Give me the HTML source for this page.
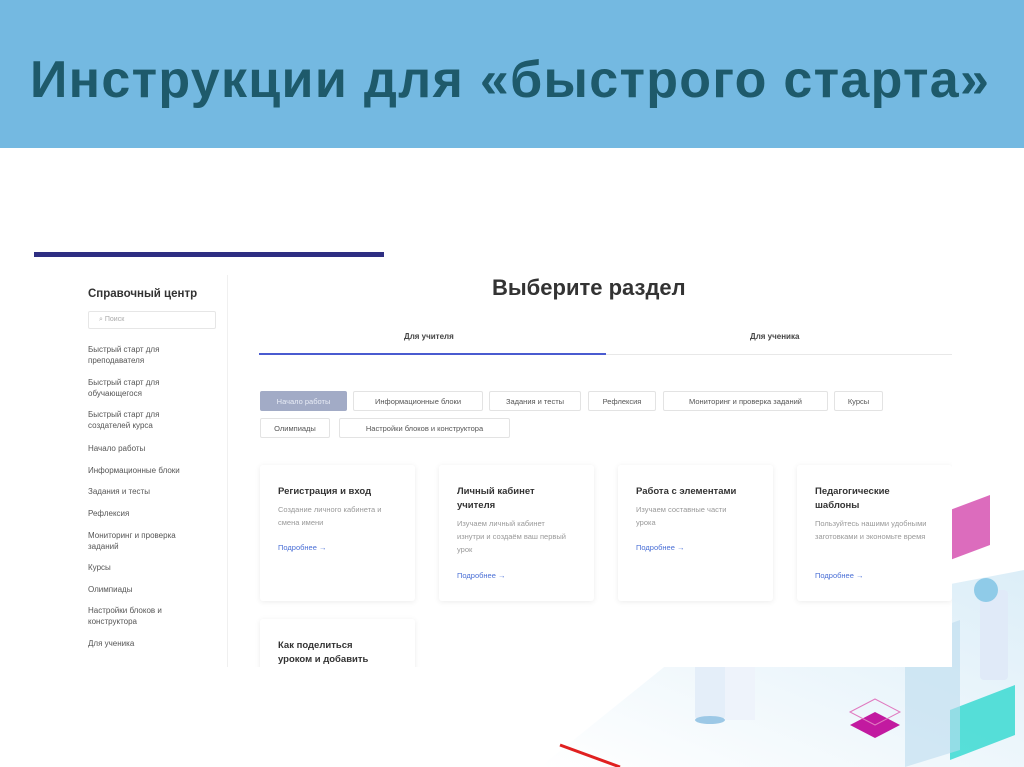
<!DOCTYPE html>
<html><head><meta charset="utf-8"><style>
*{margin:0;padding:0;box-sizing:border-box}
body{width:1024px;height:767px;overflow:hidden;background:#fff;font-family:"Liberation Sans","DejaVu Sans",sans-serif;position:relative}
.hdr{position:absolute;left:0;top:0;width:1024px;height:148px;background:#74b9e1}
.hdr h1{position:absolute;left:30px;top:50px;font-size:52px;font-weight:bold;color:#1e5a6b;white-space:nowrap;letter-spacing:1.3px}
.bar{position:absolute;left:34px;top:252px;width:350px;height:5px;background:#2e2e82}
.deco{position:absolute;left:540px;top:490px;width:484px;height:277px}
.panel{position:absolute;left:82px;top:275px;width:870px;height:392px;background:#fff;overflow:hidden}
.side{position:absolute;left:0;top:0;width:146px;height:392px;border-right:1px solid #f0f0f0}
.side h3{position:absolute;left:6px;top:13px;font-size:11.5px;color:#333;font-weight:bold}
.search{position:absolute;left:6px;top:36px;width:128px;height:18px;border:1px solid #e6e6e6;border-radius:2px;font-size:7px;color:#aaa;padding:4px 10px}
.side .it{position:absolute;left:6px;font-size:8px;color:#555;line-height:11px}
.title{position:absolute;left:410px;top:0;font-size:22px;font-weight:bold;color:#333}
.tab{position:absolute;top:57px;font-size:8px;color:#444;font-weight:bold}
.tline{position:absolute;left:177px;top:78px;width:347px;height:2px;background:#4a5bd0}
.tline2{position:absolute;left:524px;top:79px;width:346px;height:1px;background:#e8e8e8}
.chip{position:absolute;height:20px;border:1px solid #e3e3e3;font-size:7.5px;color:#555;padding:5px 0;text-align:center;white-space:nowrap;border-radius:2px}
.chip.act{background:#a2abc6;color:#e8ecf6;border-color:#a2abc6}
.card{position:absolute;top:190px;width:155px;height:136px;background:#fff;box-shadow:0 1px 6px rgba(0,0,0,.08);border-radius:3px}
.card h4{position:absolute;left:18px;top:20px;font-size:9.5px;color:#333;font-weight:bold;line-height:14px;width:110px}
.card p{position:absolute;left:18px;font-size:7.5px;color:#999;line-height:13px;width:112px}
.card a{position:absolute;left:18px;font-size:7.5px;color:#4a6fd6;text-decoration:none}
</style></head><body>
<div class="hdr"><h1>Инструкции для «быстрого старта»</h1></div>
<div class="bar"></div>
<svg class="deco" viewBox="0 0 484 277">
<defs><linearGradient id="g" x1="0" y1="1" x2="1" y2="0"><stop offset="0" stop-color="#fff"/><stop offset="1" stop-color="#dceef8"/></linearGradient></defs>
<polygon points="0,277 170,140 484,80 484,277" fill="url(#g)"/>
<rect x="155" y="160" width="30" height="70" fill="#e4eef9" rx="4"/>
<ellipse cx="170" cy="230" rx="15" ry="4" fill="#9cc8e6"/>
<rect x="185" y="170" width="30" height="60" fill="#eef3fb"/>
<rect x="440" y="100" width="28" height="90" fill="#e0eaf8" rx="4"/>
<circle cx="446" cy="100" r="12" fill="#8fcbe8"/>
<polygon points="410,20 450,5 450,55 410,70" fill="#d652b2" opacity=".85"/>
<polygon points="410,220 475,195 475,245 410,270" fill="#2fd8d0" opacity=".8"/>
<polygon points="365,150 420,130 420,260 365,277" fill="#bcdcef" opacity=".6"/>
<polygon points="310,235 335,222 360,235 335,248" fill="#c21aa0"/>
<polygon points="310,222 335,209 360,222 335,235" fill="none" stroke="#e07ac0"/>
<line x1="20" y1="255" x2="80" y2="277" stroke="#e02020" stroke-width="3"/>
</svg>
<div class="panel">
 <div class="side">
  <h3>Справочный центр</h3>
  <div class="search">⌕ Поиск</div>
  <div class="it" style="top:69px">Быстрый старт для<br>преподавателя</div>
  <div class="it" style="top:102px">Быстрый старт для<br>обучающегося</div>
  <div class="it" style="top:134px">Быстрый старт для<br>создателей курса</div>
  <div class="it" style="top:168px">Начало работы</div>
  <div class="it" style="top:190px">Информационные блоки</div>
  <div class="it" style="top:211px">Задания и тесты</div>
  <div class="it" style="top:233px">Рефлексия</div>
  <div class="it" style="top:255px">Мониторинг и проверка<br>заданий</div>
  <div class="it" style="top:287px">Курсы</div>
  <div class="it" style="top:309px">Олимпиады</div>
  <div class="it" style="top:330px">Настройки блоков и<br>конструктора</div>
  <div class="it" style="top:363px">Для ученика</div>
 </div>
 <div class="title">Выберите раздел</div>
 <div class="tab" style="left:322px">Для учителя</div>
 <div class="tab" style="left:668px">Для ученика</div>
 <div class="tline"></div><div class="tline2"></div>
 <div class="chip act" style="left:178px;top:116px;width:87px">Начало работы</div>
 <div class="chip" style="left:271px;top:116px;width:130px">Информационные блоки</div>
 <div class="chip" style="left:407px;top:116px;width:92px">Задания и тесты</div>
 <div class="chip" style="left:506px;top:116px;width:68px">Рефлексия</div>
 <div class="chip" style="left:581px;top:116px;width:165px">Мониторинг и проверка заданий</div>
 <div class="chip" style="left:752px;top:116px;width:49px">Курсы</div>
 <div class="chip" style="left:178px;top:143px;width:70px">Олимпиады</div>
 <div class="chip" style="left:257px;top:143px;width:171px">Настройки блоков и конструктора</div>
 <div class="card" style="left:178px"><h4>Регистрация и вход</h4><p style="top:38px">Создание личного кабинета и смена имени</p><a style="top:78px">Подробнее →</a></div>
 <div class="card" style="left:357px"><h4>Личный кабинет учителя</h4><p style="top:52px">Изучаем личный кабинет изнутри и создаём ваш первый урок</p><a style="top:106px">Подробнее →</a></div>
 <div class="card" style="left:536px"><h4>Работа с элементами</h4><p style="top:38px">Изучаем составные части урока</p><a style="top:78px">Подробнее →</a></div>
 <div class="card" style="left:715px"><h4>Педагогические шаблоны</h4><p style="top:52px">Пользуйтесь нашими удобными заготовками и экономьте время</p><a style="top:106px">Подробнее →</a></div>
 <div class="card" style="left:178px;top:344px;height:60px"><h4>Как поделиться уроком и добавить</h4></div>
</div>
</body></html>
